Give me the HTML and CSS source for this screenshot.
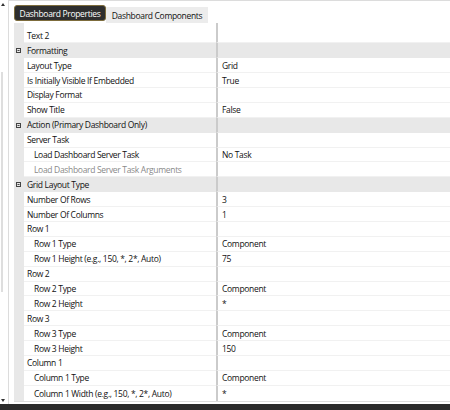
FILE: index.html
```html
<!DOCTYPE html>
<html>
<head>
<meta charset="utf-8">
<link rel="stylesheet" href="styles.css">
</head>
<body>
<div class="app">
  <div class="vscroll">
    <svg class="arrow" width="4" height="3" viewBox="0 0 4 3"><polygon points="2,0 4,3 0,3" fill="#333"/></svg>
    <div class="track"><div class="thumb"></div></div>
    <svg class="arrow" width="4" height="3" viewBox="0 0 4 3"><polygon points="0,0 4,0 2,3" fill="#333"/></svg>
  </div>
  <div class="panel">
    <div class="tabs">
      <div class="tab active">Dashboard Properties</div>
      <div class="tab">Dashboard Components</div>
    </div>
    <div class="grid">
      <div class="row partial"><div class="gutter"></div><div class="name"></div><div class="val"></div></div>
      <div class="row"><div class="gutter"></div><div class="name">Text 2</div><div class="val"></div></div>
      <div class="row cat"><div class="gutter"><svg width="5" height="5" viewBox="0 0 5 5"><rect x="0.5" y="0.5" width="4" height="4" fill="none" stroke="#444"/><line x1="1.5" y1="2.5" x2="3.5" y2="2.5" stroke="#444"/></svg></div><div class="name">Formatting</div><div class="val"></div></div>
      <div class="row"><div class="gutter"></div><div class="name">Layout Type</div><div class="val">Grid</div></div>
      <div class="row"><div class="gutter"></div><div class="name">Is Initially Visible If Embedded</div><div class="val">True</div></div>
      <div class="row"><div class="gutter"></div><div class="name">Display Format</div><div class="val"></div></div>
      <div class="row"><div class="gutter"></div><div class="name">Show Title</div><div class="val">False</div></div>
      <div class="row cat"><div class="gutter"><svg width="5" height="5" viewBox="0 0 5 5"><rect x="0.5" y="0.5" width="4" height="4" fill="none" stroke="#444"/><line x1="1.5" y1="2.5" x2="3.5" y2="2.5" stroke="#444"/></svg></div><div class="name">Action (Primary Dashboard Only)</div><div class="val"></div></div>
      <div class="row"><div class="gutter"></div><div class="name">Server Task</div><div class="val"></div></div>
      <div class="row"><div class="gutter"></div><div class="name sub">Load Dashboard Server Task</div><div class="val">No Task</div></div>
      <div class="row"><div class="gutter"></div><div class="name sub disabled">Load Dashboard Server Task Arguments</div><div class="val"></div></div>
      <div class="row cat"><div class="gutter"><svg width="5" height="5" viewBox="0 0 5 5"><rect x="0.5" y="0.5" width="4" height="4" fill="none" stroke="#444"/><line x1="1.5" y1="2.5" x2="3.5" y2="2.5" stroke="#444"/></svg></div><div class="name">Grid Layout Type</div><div class="val"></div></div>
      <div class="row"><div class="gutter"></div><div class="name">Number Of Rows</div><div class="val">3</div></div>
      <div class="row"><div class="gutter"></div><div class="name">Number Of Columns</div><div class="val">1</div></div>
      <div class="row"><div class="gutter"></div><div class="name">Row 1</div><div class="val"></div></div>
      <div class="row"><div class="gutter"></div><div class="name sub">Row 1 Type</div><div class="val">Component</div></div>
      <div class="row"><div class="gutter"></div><div class="name sub">Row 1 Height (e.g., 150, *, 2*, Auto)</div><div class="val">75</div></div>
      <div class="row"><div class="gutter"></div><div class="name">Row 2</div><div class="val"></div></div>
      <div class="row"><div class="gutter"></div><div class="name sub">Row 2 Type</div><div class="val">Component</div></div>
      <div class="row"><div class="gutter"></div><div class="name sub">Row 2 Height</div><div class="val">*</div></div>
      <div class="row"><div class="gutter"></div><div class="name">Row 3</div><div class="val"></div></div>
      <div class="row"><div class="gutter"></div><div class="name sub">Row 3 Type</div><div class="val">Component</div></div>
      <div class="row"><div class="gutter"></div><div class="name sub">Row 3 Height</div><div class="val">150</div></div>
      <div class="row"><div class="gutter"></div><div class="name">Column 1</div><div class="val"></div></div>
      <div class="row"><div class="gutter"></div><div class="name sub">Column 1 Type</div><div class="val">Component</div></div>
      <div class="row last"><div class="gutter"></div><div class="name sub">Column 1 Width (e.g., 150, *, 2*, Auto)</div><div class="val">*</div></div>
    </div>
  </div>
  <div class="statusbar"></div>
</div>
</body>
</html>
```
FILE: styles.css
```css
html, body {
  margin: 0;
  padding: 0;
}
body {
  width: 450px;
  height: 410px;
  overflow: hidden;
  background: #fff;
  font-family: "Open Sans", "Noto Sans", sans-serif;
  font-size: 8.5px;
  font-weight: 500;
  letter-spacing: -0.32px;
  color: #111;
}
.app {
  display: grid;
  grid-template-columns: 8px 442px;
  grid-template-rows: 404px 6px;
  height: 410px;
}
.vscroll {
  display: flex;
  flex-direction: column;
  align-items: flex-start;
  padding: 3px 0 2px 1px;
  box-sizing: border-box;
}
.arrow {
  display: block;
  flex: 0 0 auto;
}
.track {
  flex: 1;
  padding-top: 66px;
}
.thumb {
  width: 2px;
  height: 220px;
  background: #dedede;
}
.panel {
  border-left: 1px solid #dcdcdc;
  border-top: 1px solid #dcdcdc;
  padding-left: 5px;
  display: flex;
  flex-direction: column;
  min-height: 0;
}
.tabs {
  display: flex;
  height: 22px;
  flex: 0 0 auto;
}
.tab {
  box-sizing: border-box;
  margin-top: 6px;
  height: 16px;
  width: 102px;
  background: #ececec;
  display: flex;
  align-items: center;
  justify-content: center;
  white-space: nowrap;
}
.tab.active {
  margin-top: 4px;
  width: 92px;
  background: #2e2e2e;
  color: #fff;
  border: 1px solid #7d6c3c;
  border-radius: 3px;
}
.grid {
  display: flex;
  flex-direction: column;
  border-bottom: 1px solid #dddddd;
}
.row {
  display: grid;
  grid-template-columns: 10px 192px 1fr;
  height: 14.9px;
}
.row.partial {
  height: 5.4px;
}
.gutter {
  background: #e8e8e8;
  display: flex;
  align-items: center;
  padding-left: 2px;
}
.gutter svg {
  display: block;
}
.name, .val {
  box-sizing: border-box;
  border-bottom: 1px solid #f1f1f1;
  display: flex;
  align-items: center;
  white-space: nowrap;
  overflow: hidden;
}
.name {
  padding-left: 3px;
}
.name.sub {
  padding-left: 10px;
}
.name.disabled {
  color: #8a8a8a;
}
.val {
  border-left: 2px solid #cbcbcb;
  padding-left: 4px;
}
.row.cat .name, .row.cat .val {
  background: #e8e8e8;
  border-bottom-color: #e8e8e8;
}
.row.last .name, .row.last .val, .row.partial .name, .row.partial .val {
  border-bottom: none;
}
.statusbar {
  grid-column: 1 / 3;
  background: #2b2b2b;
}
```
